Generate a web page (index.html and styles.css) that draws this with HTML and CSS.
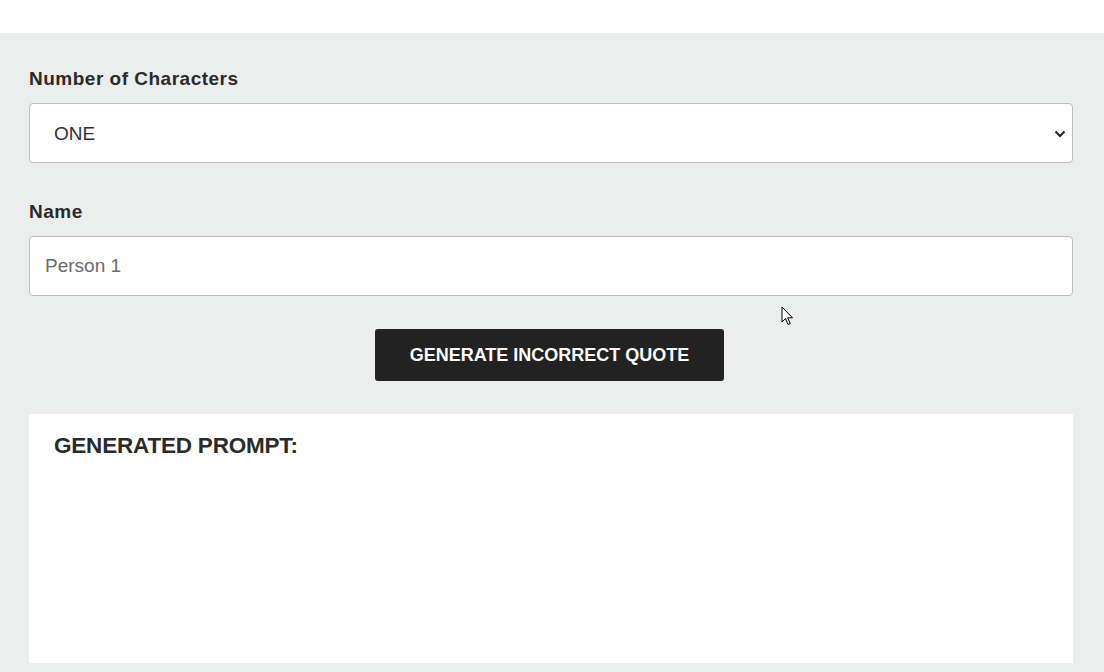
FILE: index.html
```html
<!DOCTYPE html>
<html lang="en">
<head>
<meta charset="utf-8">
<title>Incorrect Quotes Generator</title>
<link rel="stylesheet" href="styles.css">
</head>
<body>
<div class="topbar"></div>
<main class="panel">
  <div class="field">
    <label class="label" for="count">Number of Characters</label>
    <div class="select-wrap">
      <select id="count" class="control select">
        <option>ONE</option>
        <option>TWO</option>
        <option>THREE</option>
      </select>
      <svg class="chev" width="12" height="8" viewBox="0 0 12 8"><path d="M1.5 1.5 L6 6 L10.5 1.5" fill="none" stroke="#222" stroke-width="2"/></svg>
    </div>
  </div>
  <div class="field">
    <label class="label" for="name">Name</label>
    <input id="name" class="control input" type="text" placeholder="Person 1">
  </div>
  <div class="actions">
    <button class="btn" type="button">GENERATE INCORRECT QUOTE</button>
  </div>
  <section class="output">
    <h2 class="output-title">GENERATED PROMPT:</h2>
  </section>
  <svg class="cursor" width="14" height="21" viewBox="0 0 14 21"><path d="M1 1 L1 16 L4.5 12.5 L7 18.5 L9.2 17.6 L6.8 11.8 L11.5 11.8 Z" fill="#fff" stroke="#000" stroke-width="1" stroke-linejoin="round"/></svg>
</main>
</body>
</html>
```
FILE: styles.css
```css
* { box-sizing: border-box; }
html, body { margin: 0; padding: 0; }
body {
  background: #fff;
  font-family: "Liberation Sans", Arial, sans-serif;
  color: #2b2b2b;
  width: 1104px;
  height: 672px;
  overflow: hidden;
}
.topbar { height: 33px; background: #fff; }
.panel {
  position: relative;
  background: #eceeed;
  padding: 34px 31px 9px 29px;
  height: 639px;
  display: flex;
  flex-direction: column;
}
.field { display: flex; flex-direction: column; }
.field + .field { margin-top: 37px; }
.label {
  font-size: 19px;
  font-weight: 700;
  line-height: 24px;
  color: #2a2a2a;
  margin-bottom: 12px;
  letter-spacing: 0.5px;
}
.select-wrap { position: relative; }
.control {
  display: block;
  width: 100%;
  height: 60px;
  background: #fff;
  border: 1px solid #bdbdbd;
  border-radius: 4px;
  font-family: "Liberation Sans", Arial, sans-serif;
  font-size: 19px;
  color: #333;
  outline: none;
}
.select {
  appearance: none;
  -webkit-appearance: none;
  padding: 0 40px 0 24px;
}
.chev { position: absolute; right: 7px; top: 27px; pointer-events: none; }
.input { padding: 0 15px; }
.input::placeholder { color: #6b6b6b; }
.actions {
  display: flex;
  justify-content: center;
  margin-top: 33px;
  padding-right: 3px;
}
.btn {
  width: 349px;
  height: 52px;
  background: #222;
  color: #fff;
  border: none;
  border-radius: 3px;
  font-family: "Liberation Sans", Arial, sans-serif;
  font-weight: 700;
  font-size: 18px;
  letter-spacing: 0;
  cursor: pointer;
}
.output {
  margin-top: 33px;
  background: #fff;
  flex: 1;
  padding: 20px 25px;
}
.output-title {
  margin: 0;
  font-size: 22.5px;
  font-weight: 700;
  line-height: 24px;
  color: #2b2b2b;
  letter-spacing: -0.2px;
}
.cursor { position: absolute; left: 781px; top: 273px; }
```
